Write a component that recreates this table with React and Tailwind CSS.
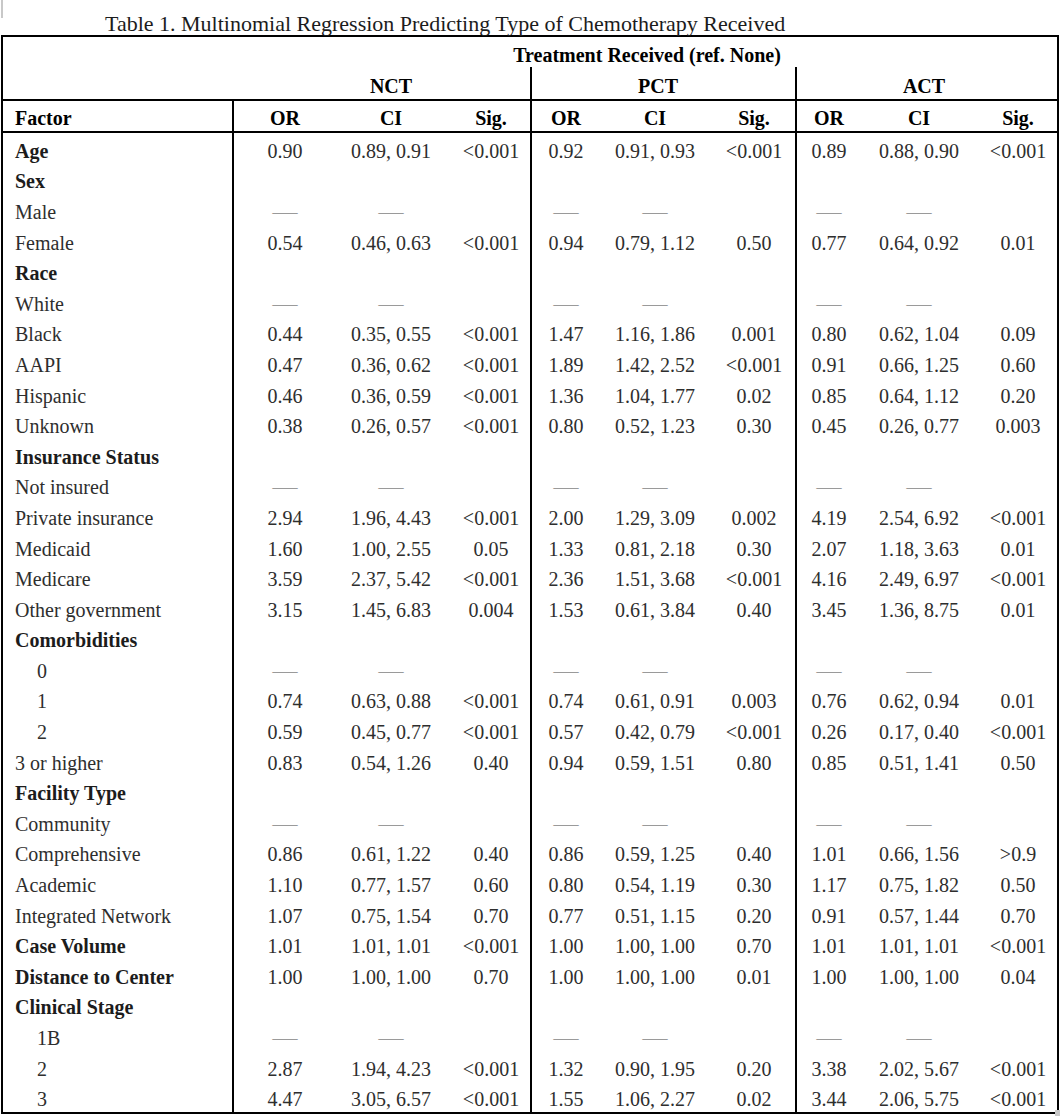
import React from 'react'

const D = '—'

const rows = [
  { label: 'Age', bold: true, v: ['0.90', '0.89, 0.91', '<0.001', '0.92', '0.91, 0.93', '<0.001', '0.89', '0.88, 0.90', '<0.001'] },
  { label: 'Sex', bold: true },
  { label: 'Male', v: [D, D, '', D, D, '', D, D, ''] },
  { label: 'Female', v: ['0.54', '0.46, 0.63', '<0.001', '0.94', '0.79, 1.12', '0.50', '0.77', '0.64, 0.92', '0.01'] },
  { label: 'Race', bold: true },
  { label: 'White', v: [D, D, '', D, D, '', D, D, ''] },
  { label: 'Black', v: ['0.44', '0.35, 0.55', '<0.001', '1.47', '1.16, 1.86', '0.001', '0.80', '0.62, 1.04', '0.09'] },
  { label: 'AAPI', v: ['0.47', '0.36, 0.62', '<0.001', '1.89', '1.42, 2.52', '<0.001', '0.91', '0.66, 1.25', '0.60'] },
  { label: 'Hispanic', v: ['0.46', '0.36, 0.59', '<0.001', '1.36', '1.04, 1.77', '0.02', '0.85', '0.64, 1.12', '0.20'] },
  { label: 'Unknown', v: ['0.38', '0.26, 0.57', '<0.001', '0.80', '0.52, 1.23', '0.30', '0.45', '0.26, 0.77', '0.003'] },
  { label: 'Insurance Status', bold: true },
  { label: 'Not insured', v: [D, D, '', D, D, '', D, D, ''] },
  { label: 'Private insurance', v: ['2.94', '1.96, 4.43', '<0.001', '2.00', '1.29, 3.09', '0.002', '4.19', '2.54, 6.92', '<0.001'] },
  { label: 'Medicaid', v: ['1.60', '1.00, 2.55', '0.05', '1.33', '0.81, 2.18', '0.30', '2.07', '1.18, 3.63', '0.01'] },
  { label: 'Medicare', v: ['3.59', '2.37, 5.42', '<0.001', '2.36', '1.51, 3.68', '<0.001', '4.16', '2.49, 6.97', '<0.001'] },
  { label: 'Other government', v: ['3.15', '1.45, 6.83', '0.004', '1.53', '0.61, 3.84', '0.40', '3.45', '1.36, 8.75', '0.01'] },
  { label: 'Comorbidities', bold: true },
  { label: '0', indent: true, v: [D, D, '', D, D, '', D, D, ''] },
  { label: '1', indent: true, v: ['0.74', '0.63, 0.88', '<0.001', '0.74', '0.61, 0.91', '0.003', '0.76', '0.62, 0.94', '0.01'] },
  { label: '2', indent: true, v: ['0.59', '0.45, 0.77', '<0.001', '0.57', '0.42, 0.79', '<0.001', '0.26', '0.17, 0.40', '<0.001'] },
  { label: '3 or higher', v: ['0.83', '0.54, 1.26', '0.40', '0.94', '0.59, 1.51', '0.80', '0.85', '0.51, 1.41', '0.50'] },
  { label: 'Facility Type', bold: true },
  { label: 'Community', v: [D, D, '', D, D, '', D, D, ''] },
  { label: 'Comprehensive', v: ['0.86', '0.61, 1.22', '0.40', '0.86', '0.59, 1.25', '0.40', '1.01', '0.66, 1.56', '>0.9'] },
  { label: 'Academic', v: ['1.10', '0.77, 1.57', '0.60', '0.80', '0.54, 1.19', '0.30', '1.17', '0.75, 1.82', '0.50'] },
  { label: 'Integrated Network', v: ['1.07', '0.75, 1.54', '0.70', '0.77', '0.51, 1.15', '0.20', '0.91', '0.57, 1.44', '0.70'] },
  { label: 'Case Volume', bold: true, v: ['1.01', '1.01, 1.01', '<0.001', '1.00', '1.00, 1.00', '0.70', '1.01', '1.01, 1.01', '<0.001'] },
  { label: 'Distance to Center', bold: true, v: ['1.00', '1.00, 1.00', '0.70', '1.00', '1.00, 1.00', '0.01', '1.00', '1.00, 1.00', '0.04'] },
  { label: 'Clinical Stage', bold: true },
  { label: '1B', indent: true, v: [D, D, '', D, D, '', D, D, ''] },
  { label: '2', indent: true, v: ['2.87', '1.94, 4.23', '<0.001', '1.32', '0.90, 1.95', '0.20', '3.38', '2.02, 5.67', '<0.001'] },
  { label: '3', indent: true, v: ['4.47', '3.05, 6.57', '<0.001', '1.55', '1.06, 2.27', '0.02', '3.44', '2.06, 5.75', '<0.001'] },
]

const grid = 'grid grid-cols-[229px_104px_110px_84px_70px_110px_85px_66px_116px_80px]'

// per-column tweaks: group borders + small nudges for the Sig columns
const colCls = [
  'border-l-2 border-black',
  '',
  'pl-[6px]',
  'border-l-2 border-black',
  '',
  'pl-[3px]',
  'border-l-2 border-black',
  '',
  'pl-[2px]',
]

const heads = ['OR', 'CI', 'Sig.', 'OR', 'CI', 'Sig.', 'OR', 'CI', 'Sig.']

function Row({ r }) {
  const vals = r.v || ['', '', '', '', '', '', '', '', '']
  return (
    <div className={grid + ' h-[30.6px]'}>
      <div
        className={
          'flex items-center pt-[5px] ' +
          (r.indent ? 'pl-[34px] ' : 'pl-[12px] ') +
          (r.bold ? 'font-bold text-[#1c1c1c]' : 'text-[#2e2e2e]')
        }
      >
        {r.label}
      </div>
      {vals.map((x, i) => (
        <div key={i} className={'flex items-center justify-center pt-[5px] ' + colCls[i]}>
          {x === D ? (
            <span className="inline-block scale-x-125 text-[#9a9a9a]">{x}</span>
          ) : (
            <span className="text-[#2e2e2e]">{x}</span>
          )}
        </div>
      ))}
    </div>
  )
}

export default function App() {
  return (
    <div className="relative w-[1062px] h-[1116px] bg-white font-['Liberation_Serif',serif] text-[20px] leading-none text-black">
      <div className="absolute left-[1px] top-0 w-[2px] h-[18px] bg-[#c8c8c8]"></div>

      <div className="h-[35px] pl-[105px] pt-[12px] text-[22px] leading-[24px] text-[#1c1c1c]">
        Table 1. Multinomial Regression Predicting Type of Chemotherapy Received
      </div>

      <div className="ml-[1px] w-[1058px] border-2 border-black">
        {/* header */}
        <div className="h-[30px] flex">
          <div className="w-[229px]"></div>
          <div className="flex-1 flex items-center justify-center pl-[5px] pt-[5px] font-bold">
            Treatment Received (ref. None)
          </div>
        </div>
        <div className="h-[34px] flex border-b-2 border-black font-bold">
          <div className="w-[229px]"></div>
          <div className="w-[298px] flex items-center justify-center pl-[20px] pt-[5px]">NCT</div>
          <div className="w-[265px] border-l-2 border-black flex items-center justify-center pr-[11px] pt-[5px]">PCT</div>
          <div className="w-[262px] border-l-2 border-black flex items-center justify-center pr-[6px] pt-[5px]">ACT</div>
        </div>
        <div className={grid + ' h-[32px] border-b-2 border-black font-bold'}>
          <div className="flex items-center pl-[12px] pt-[3px]">Factor</div>
          {heads.map((h, i) => (
            <div key={i} className={'flex items-center justify-center pt-[3px] ' + colCls[i]}>
              {h}
            </div>
          ))}
        </div>

        {rows.map((r, i) => (
          <Row key={i} r={r} />
        ))}
      </div>

      <div className="absolute right-[2px] bottom-0 w-[5px] h-[6px] bg-[#c8c8c8]"></div>
    </div>
  )
}
